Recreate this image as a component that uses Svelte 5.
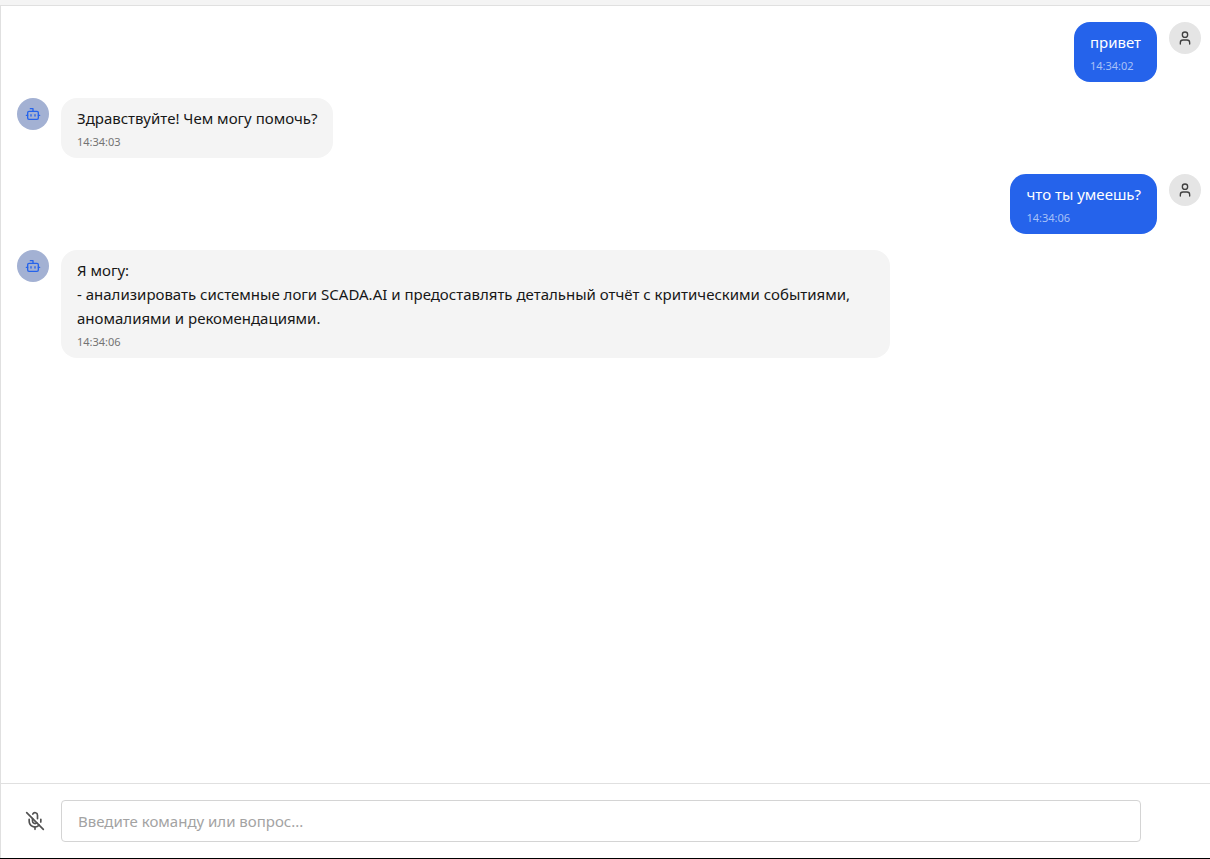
<script lang="ts">
    type Message = {
        id: number;
        role: "user" | "bot";
        text: string;
        time: string;
    };

    let messages: Message[] = $state([
        { id: 1, role: "user", text: "привет", time: "14:34:02" },
        { id: 2, role: "bot", text: "Здравствуйте! Чем могу помочь?", time: "14:34:03" },
        { id: 3, role: "user", text: "что ты умеешь?", time: "14:34:06" },
        {
            id: 4,
            role: "bot",
            text: "Я могу:\n- анализировать системные логи SCADA.AI и предоставлять детальный отчёт с критическими событиями, аномалиями и рекомендациями.",
            time: "14:34:06",
        },
    ]);

    let draft = $state("");
    let listening = $state(false);

    function send(event: SubmitEvent) {
        event.preventDefault();
        const text = draft.trim();
        if (!text) return;
        messages.push({
            id: messages.length + 1,
            role: "user",
            text,
            time: new Date().toLocaleTimeString("ru-RU"),
        });
        draft = "";
    }
</script>

<div class="page">
    <header></header>

    <main class="chat">
        <div class="messages">
            {#each messages as message (message.id)}
                <div class="message {message.role}">
                    <div class="avatar">
                        {#if message.role === "user"}
                            <svg viewBox="0 0 24 24" aria-hidden="true">
                                <path d="M19 21v-2a4 4 0 0 0-4-4H9a4 4 0 0 0-4 4v2" />
                                <circle cx="12" cy="7" r="4" />
                            </svg>
                        {:else}
                            <svg viewBox="0 0 24 24" aria-hidden="true">
                                <path d="M12 8V4H8" />
                                <rect width="16" height="12" x="4" y="8" rx="2" />
                                <path d="M2 14h2" />
                                <path d="M20 14h2" />
                                <path d="M15 13v2" />
                                <path d="M9 13v2" />
                            </svg>
                        {/if}
                    </div>
                    <div class="bubble">
                        <p>{message.text}</p>
                        <time>{message.time}</time>
                    </div>
                </div>
            {/each}
        </div>

        <form onsubmit={send}>
            <button
                type="button"
                aria-label="Голосовой ввод"
                aria-pressed={listening}
                onclick={() => (listening = !listening)}
            >
                <svg viewBox="0 0 24 24" aria-hidden="true">
                    {#if !listening}
                        <path d="M2 2l20 20" />
                        <path d="M18.89 13.23A7.12 7.12 0 0 0 19 12v-2" />
                        <path d="M5 10v2a7 7 0 0 0 12 5" />
                        <path d="M15 9.34V5a3 3 0 0 0-5.68-1.33" />
                        <path d="M9 9v3a3 3 0 0 0 5.12 2.12" />
                    {:else}
                        <rect width="6" height="13" x="9" y="2" rx="3" />
                        <path d="M19 10v2a7 7 0 0 1-14 0v-2" />
                    {/if}
                    <path d="M12 19v3" />
                </svg>
            </button>
            <input
                type="text"
                aria-label="Сообщение"
                placeholder="Введите команду или вопрос..."
                bind:value={draft}
            />
        </form>
    </main>
</div>

<style>
    :global(body) {
        margin: 0;
        background-color: #ffffff;
        font-family: "Segoe UI", "Noto Sans", sans-serif;
    }
    .page {
        box-sizing: border-box;
        height: 100vh;
        display: flex;
        flex-direction: column;
        border-bottom: 1px solid #000000;
    }
    header {
        height: 5px;
        background-color: #f4f4f4;
        border-bottom: 1px solid #e0e0e0;
    }
    .chat {
        flex: 1;
        min-height: 0;
        display: flex;
        flex-direction: column;
        border-left: 1px solid #e0e0e0;
    }
    .messages {
        flex: 1;
        overflow-y: auto;
        display: flex;
        flex-direction: column;
        gap: 16px;
        padding: 16px 9px 16px 16px;
    }
    .message {
        display: flex;
        align-items: flex-start;
        gap: 12px;
    }
    .message.user {
        flex-direction: row-reverse;
    }
    .avatar {
        flex: none;
        display: flex;
        align-items: center;
        justify-content: center;
        width: 32px;
        height: 32px;
        border-radius: 50%;
        background-color: #a3b1d3;
        color: #2563eb;
    }
    .user .avatar {
        background-color: #e5e5e5;
        color: #404040;
    }
    svg {
        width: 16px;
        height: 16px;
        fill: none;
        stroke: currentColor;
        stroke-width: 2;
        stroke-linecap: round;
        stroke-linejoin: round;
    }
    .bubble {
        box-sizing: border-box;
        max-width: 70%;
        padding: 8px 16px;
        border-radius: 16px;
        background-color: #f4f4f4;
        color: #171717;
    }
    .user .bubble {
        background-color: #2563eb;
        color: #ffffff;
    }
    .bubble p {
        margin: 0 0 4px;
        font-size: 15px;
        line-height: 24px;
        white-space: pre-wrap;
    }
    time {
        display: block;
        font-size: 11px;
        line-height: 16px;
        color: #737373;
    }
    .user time {
        color: #a8c1f7;
    }
    form {
        display: flex;
        align-items: center;
        gap: 8px;
        padding: 16px 69px 16px 16px;
        border-top: 1px solid #e0e0e0;
    }
    button {
        flex: none;
        display: flex;
        padding: 8px;
        border: none;
        background: none;
        color: #525252;
        cursor: pointer;
    }
    button svg {
        width: 20px;
        height: 20px;
    }
    input {
        flex: 1;
        min-width: 0;
        box-sizing: border-box;
        height: 42px;
        padding: 8px 16px;
        border: 1px solid #d4d4d4;
        border-radius: 4px;
        background-color: #ffffff;
        color: #171717;
        font-family: inherit;
        font-size: 15px;
    }
    input::placeholder {
        color: #a3a3a3;
    }
</style>
